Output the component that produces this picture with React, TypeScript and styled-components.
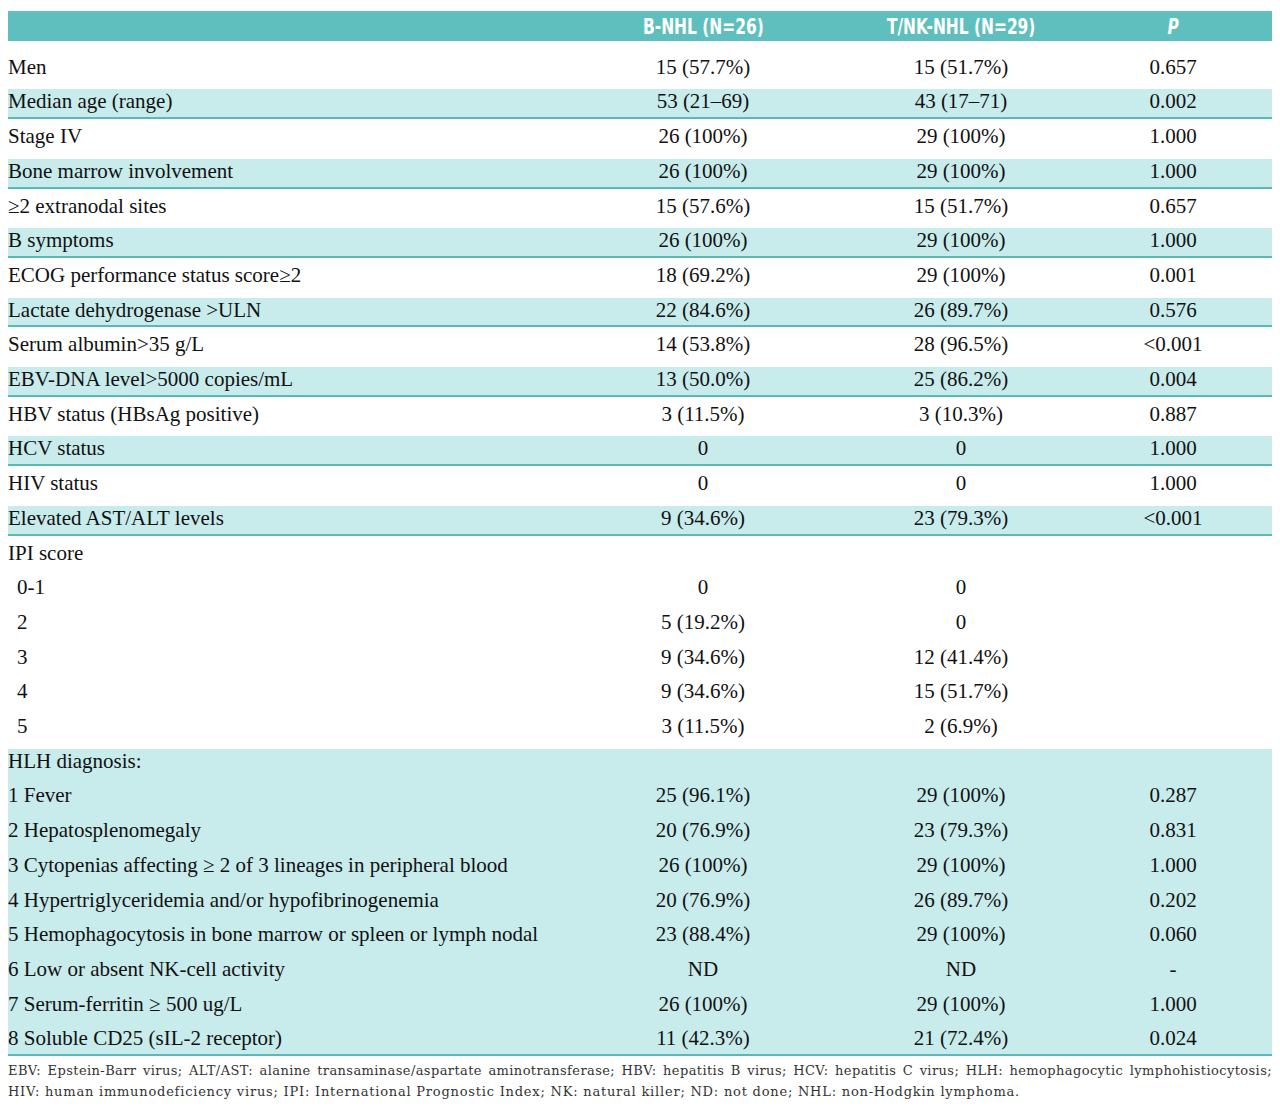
import React from 'react'
import styled, { createGlobalStyle } from 'styled-components'

const TEAL = '#5fbfbf'
const LINE = '#59b9b9'
const PALE = '#c8ebeb'
const ROW_HEIGHT = 34.71

const GlobalStyle = createGlobalStyle`
  body {
    margin: 8px;
    background: #fff;
    color: #111;
  }
`

const Table = styled.div`
  width: 1264px;
  padding-top: 3px;
  font-family: 'Liberation Serif', 'DejaVu Serif', serif;
`

const columns = '550px 290px 226px 198px'

const Header = styled.div`
  display: grid;
  grid-template-columns: ${columns};
  height: 30px;
  align-items: center;
  background: ${TEAL};
  color: #fff;
  font-family: 'DejaVu Sans Condensed', 'Liberation Sans', sans-serif;
  font-weight: 700;
  font-size: 22px;
`

const HeadCell = styled.span`
  text-align: center;
`

const HeadText = styled.span<{ $italic?: boolean }>`
  display: inline-block;
  transform: scaleX(0.78);
  font-style: ${(p) => (p.$italic ? 'italic' : 'normal')};
`

const Body = styled.div`
  margin-top: 8.7px;
`

const band = (from: string) => `linear-gradient(
  to bottom,
  transparent 0,
  transparent 5px,
  ${from} 5px,
  ${from} calc(100% - 2px),
  ${LINE} calc(100% - 2px),
  ${LINE} 100%
)`

const Block = styled.div<{ $shaded?: boolean }>`
  background: ${(p) => (p.$shaded ? band(PALE) : 'none')};
`

const Row = styled.div<{ $striped?: boolean }>`
  display: grid;
  grid-template-columns: ${columns};
  height: ${ROW_HEIGHT}px;
  line-height: ${ROW_HEIGHT}px;
  font-size: 21px;
  background: ${(p) => (p.$striped ? band(PALE) : 'none')};
`

const Label = styled.span<{ $indent?: boolean }>`
  padding-left: ${(p) => (p.$indent ? '9px' : '0')};
  white-space: nowrap;
`

const Value = styled.span`
  text-align: center;
  white-space: nowrap;
`

const Footnote = styled.div`
  margin-top: 4px;
  font-family: 'DejaVu Serif', 'Liberation Serif', serif;
  font-size: 13px;
  line-height: 21px;
  color: #333;
`

const FootLine = styled.div<{ $justify?: boolean; $spacing: number }>`
  white-space: nowrap;
  letter-spacing: ${(p) => p.$spacing}px;
  text-align: ${(p) => (p.$justify ? 'justify' : 'left')};
  text-align-last: ${(p) => (p.$justify ? 'justify' : 'auto')};
`

type Line = [string, string, string, string?]

const general: Line[] = [
  ['Men', '15 (57.7%)', '15 (51.7%)', '0.657'],
  ['Median age (range)', '53 (21–69)', '43 (17–71)', '0.002'],
  ['Stage IV', '26 (100%)', '29 (100%)', '1.000'],
  ['Bone marrow involvement', '26 (100%)', '29 (100%)', '1.000'],
  ['≥2 extranodal sites', '15 (57.6%)', '15 (51.7%)', '0.657'],
  ['B symptoms', '26 (100%)', '29 (100%)', '1.000'],
  ['ECOG performance status score≥2', '18 (69.2%)', '29 (100%)', '0.001'],
  ['Lactate dehydrogenase >ULN', '22 (84.6%)', '26 (89.7%)', '0.576'],
  ['Serum albumin>35 g/L', '14 (53.8%)', '28 (96.5%)', '<0.001'],
  ['EBV-DNA level>5000 copies/mL', '13 (50.0%)', '25 (86.2%)', '0.004'],
  ['HBV status (HBsAg positive)', '3 (11.5%)', '3 (10.3%)', '0.887'],
  ['HCV status', '0', '0', '1.000'],
  ['HIV status', '0', '0', '1.000'],
  ['Elevated AST/ALT levels', '9 (34.6%)', '23 (79.3%)', '<0.001'],
]

const ipi: Line[] = [
  ['0-1', '0', '0'],
  ['2', '5 (19.2%)', '0'],
  ['3', '9 (34.6%)', '12 (41.4%)'],
  ['4', '9 (34.6%)', '15 (51.7%)'],
  ['5', '3 (11.5%)', '2 (6.9%)'],
]

const hlh: Line[] = [
  ['1 Fever', '25 (96.1%)', '29 (100%)', '0.287'],
  ['2 Hepatosplenomegaly', '20 (76.9%)', '23 (79.3%)', '0.831'],
  ['3 Cytopenias affecting ≥ 2 of 3 lineages in peripheral blood', '26 (100%)', '29 (100%)', '1.000'],
  ['4 Hypertriglyceridemia and/or hypofibrinogenemia', '20 (76.9%)', '26 (89.7%)', '0.202'],
  ['5 Hemophagocytosis in bone marrow or spleen or lymph nodal', '23 (88.4%)', '29 (100%)', '0.060'],
  ['6 Low or absent NK-cell activity', 'ND', 'ND', '-'],
  ['7 Serum-ferritin ≥ 500 ug/L', '26 (100%)', '29 (100%)', '1.000'],
  ['8 Soluble CD25 (sIL-2 receptor)', '11 (42.3%)', '21 (72.4%)', '0.024'],
]

const DataRow: React.FC<{ line: Line; striped?: boolean; indent?: boolean }> = ({
  line,
  striped,
  indent,
}) => (
  <Row $striped={striped}>
    <Label $indent={indent}>{line[0]}</Label>
    <Value>{line[1]}</Value>
    <Value>{line[2]}</Value>
    <Value>{line[3] ?? ''}</Value>
  </Row>
)

const App: React.FC = () => (
  <>
    <GlobalStyle />
    <Table>
      <Header>
        <span />
        <HeadCell>
          <HeadText>B-NHL (N=26)</HeadText>
        </HeadCell>
        <HeadCell>
          <HeadText>T/NK-NHL (N=29)</HeadText>
        </HeadCell>
        <HeadCell>
          <HeadText $italic>P</HeadText>
        </HeadCell>
      </Header>
      <Body>
        <Block>
          {general.map((l, i) => (
            <DataRow key={l[0]} line={l} striped={i % 2 === 1} />
          ))}
        </Block>
        <Block>
          <Row>
            <Label>IPI score</Label>
          </Row>
          {ipi.map((l) => (
            <DataRow key={l[0]} line={l} indent />
          ))}
        </Block>
        <Block $shaded>
          <Row>
            <Label>HLH diagnosis:</Label>
          </Row>
          {hlh.map((l) => (
            <DataRow key={l[0]} line={l} />
          ))}
        </Block>
      </Body>
      <Footnote>
        <FootLine $justify $spacing={0.4}>
          EBV: Epstein-Barr virus; ALT/AST: alanine transaminase/aspartate aminotransferase; HBV: hepatitis B
          virus; HCV: hepatitis C virus; HLH: hemophagocytic lymphohistiocytosis;
        </FootLine>
        <FootLine $spacing={0.78}>
          HIV: human immunodeficiency virus; IPI: International Prognostic Index; NK: natural killer; ND: not
          done; NHL: non-Hodgkin lymphoma.
        </FootLine>
      </Footnote>
    </Table>
  </>
)

export default App
